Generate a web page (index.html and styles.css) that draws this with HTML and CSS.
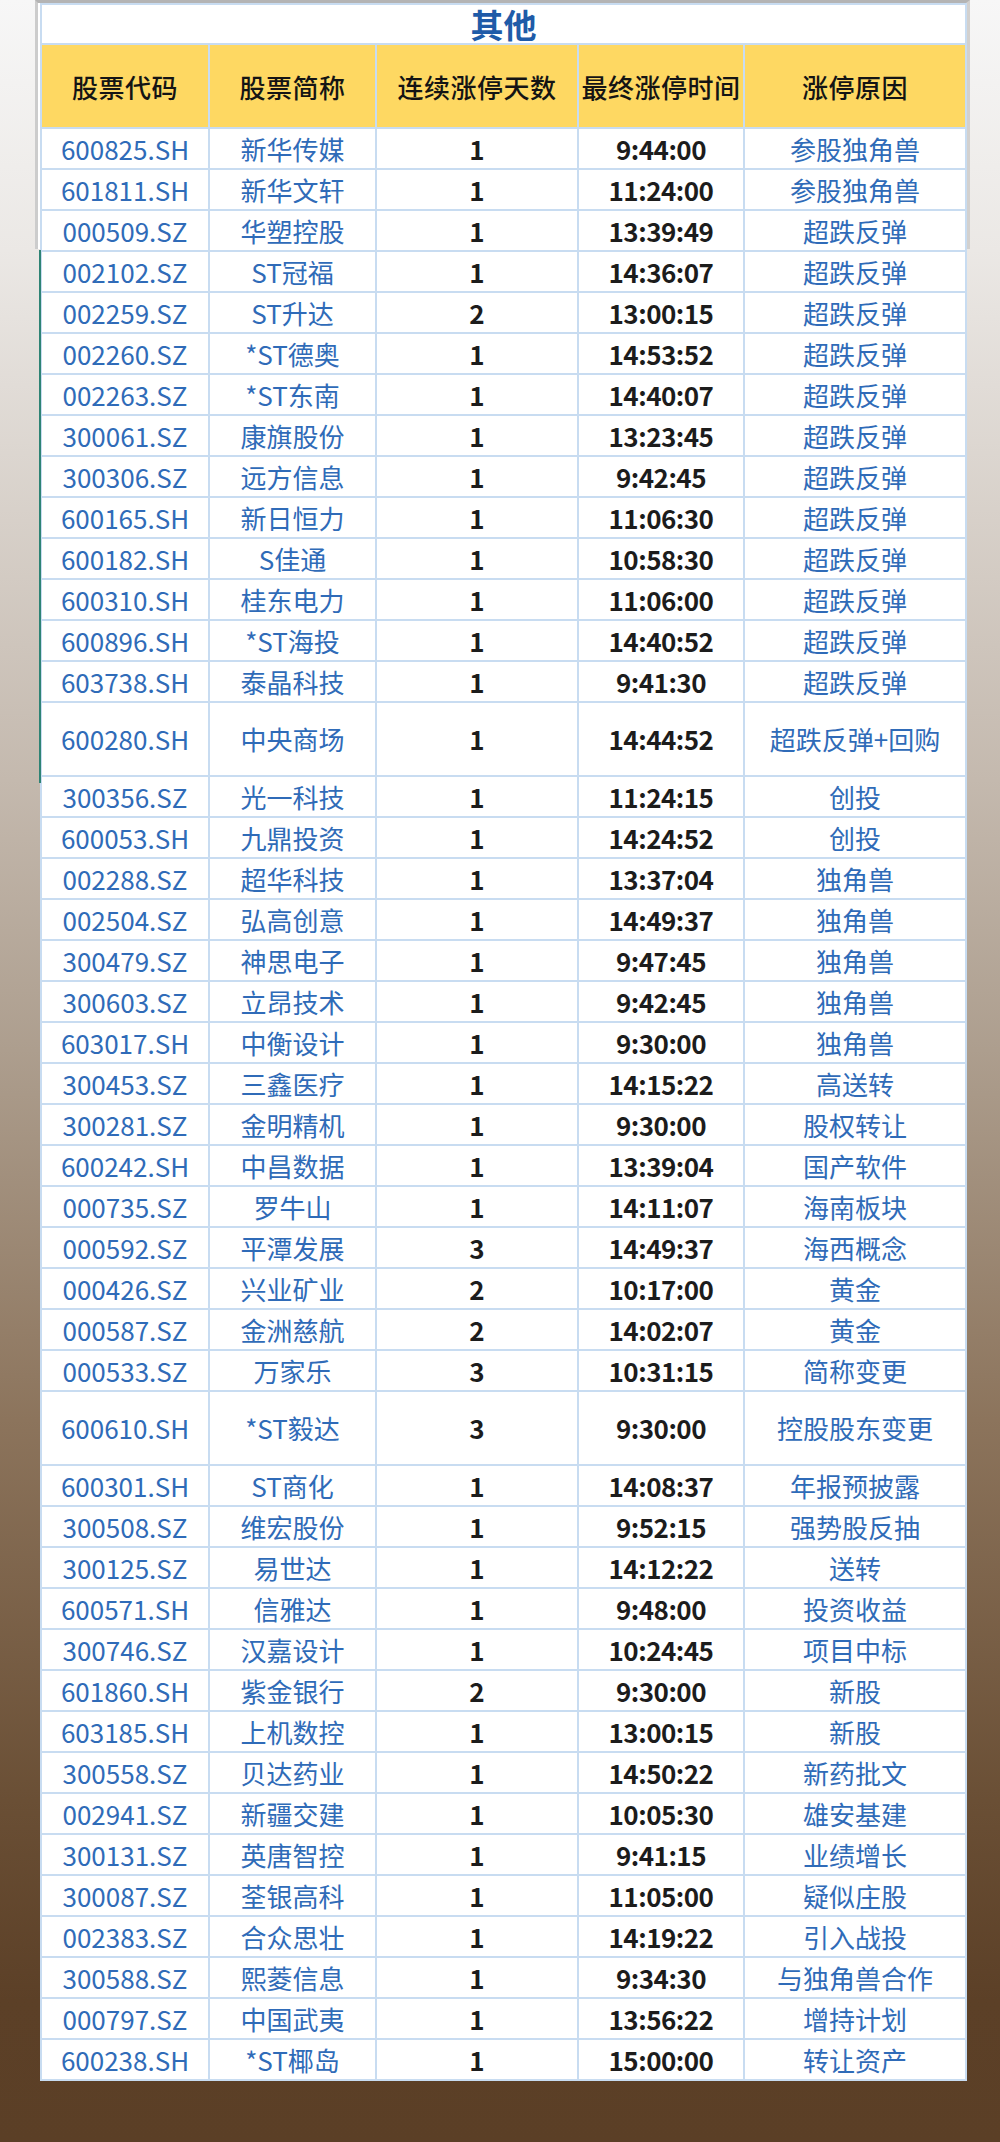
FILE: index.html
```html
<!DOCTYPE html>
<html lang="zh-CN">
<head>
<meta charset="utf-8">
<title>其他</title>
<link rel="stylesheet" href="styles.css">
</head>
<body>
<div class="page">
  <div class="card-shadow"></div>
  <div class="edge-line"></div>
  <table class="grid">
    <colgroup>
      <col class="c1"><col class="c2"><col class="c3"><col class="c4"><col class="c5">
    </colgroup>
    <thead>
      <tr class="title-row"><th colspan="5" class="title">其他</th></tr>
      <tr class="head-row">
        <th>股票代码</th><th>股票简称</th><th>连续涨停天数</th><th>最终涨停时间</th><th>涨停原因</th>
      </tr>
    </thead>
    <tbody>
      <tr><td>600825.SH</td><td>新华传媒</td><td class="n">1</td><td class="t">9:44:00</td><td>参股独角兽</td></tr>
      <tr><td>601811.SH</td><td>新华文轩</td><td class="n">1</td><td class="t">11:24:00</td><td>参股独角兽</td></tr>
      <tr><td>000509.SZ</td><td>华塑控股</td><td class="n">1</td><td class="t">13:39:49</td><td>超跌反弹</td></tr>
      <tr><td>002102.SZ</td><td>ST冠福</td><td class="n">1</td><td class="t">14:36:07</td><td>超跌反弹</td></tr>
      <tr><td>002259.SZ</td><td>ST升达</td><td class="n">2</td><td class="t">13:00:15</td><td>超跌反弹</td></tr>
      <tr><td>002260.SZ</td><td>*ST德奥</td><td class="n">1</td><td class="t">14:53:52</td><td>超跌反弹</td></tr>
      <tr><td>002263.SZ</td><td>*ST东南</td><td class="n">1</td><td class="t">14:40:07</td><td>超跌反弹</td></tr>
      <tr><td>300061.SZ</td><td>康旗股份</td><td class="n">1</td><td class="t">13:23:45</td><td>超跌反弹</td></tr>
      <tr><td>300306.SZ</td><td>远方信息</td><td class="n">1</td><td class="t">9:42:45</td><td>超跌反弹</td></tr>
      <tr><td>600165.SH</td><td>新日恒力</td><td class="n">1</td><td class="t">11:06:30</td><td>超跌反弹</td></tr>
      <tr><td>600182.SH</td><td>S佳通</td><td class="n">1</td><td class="t">10:58:30</td><td>超跌反弹</td></tr>
      <tr><td>600310.SH</td><td>桂东电力</td><td class="n">1</td><td class="t">11:06:00</td><td>超跌反弹</td></tr>
      <tr><td>600896.SH</td><td>*ST海投</td><td class="n">1</td><td class="t">14:40:52</td><td>超跌反弹</td></tr>
      <tr><td>603738.SH</td><td>泰晶科技</td><td class="n">1</td><td class="t">9:41:30</td><td>超跌反弹</td></tr>
      <tr class="tall"><td>600280.SH</td><td>中央商场</td><td class="n">1</td><td class="t">14:44:52</td><td>超跌反弹+回购</td></tr>
      <tr><td>300356.SZ</td><td>光一科技</td><td class="n">1</td><td class="t">11:24:15</td><td>创投</td></tr>
      <tr><td>600053.SH</td><td>九鼎投资</td><td class="n">1</td><td class="t">14:24:52</td><td>创投</td></tr>
      <tr><td>002288.SZ</td><td>超华科技</td><td class="n">1</td><td class="t">13:37:04</td><td>独角兽</td></tr>
      <tr><td>002504.SZ</td><td>弘高创意</td><td class="n">1</td><td class="t">14:49:37</td><td>独角兽</td></tr>
      <tr><td>300479.SZ</td><td>神思电子</td><td class="n">1</td><td class="t">9:47:45</td><td>独角兽</td></tr>
      <tr><td>300603.SZ</td><td>立昂技术</td><td class="n">1</td><td class="t">9:42:45</td><td>独角兽</td></tr>
      <tr><td>603017.SH</td><td>中衡设计</td><td class="n">1</td><td class="t">9:30:00</td><td>独角兽</td></tr>
      <tr><td>300453.SZ</td><td>三鑫医疗</td><td class="n">1</td><td class="t">14:15:22</td><td>高送转</td></tr>
      <tr><td>300281.SZ</td><td>金明精机</td><td class="n">1</td><td class="t">9:30:00</td><td>股权转让</td></tr>
      <tr><td>600242.SH</td><td>中昌数据</td><td class="n">1</td><td class="t">13:39:04</td><td>国产软件</td></tr>
      <tr><td>000735.SZ</td><td>罗牛山</td><td class="n">1</td><td class="t">14:11:07</td><td>海南板块</td></tr>
      <tr><td>000592.SZ</td><td>平潭发展</td><td class="n">3</td><td class="t">14:49:37</td><td>海西概念</td></tr>
      <tr><td>000426.SZ</td><td>兴业矿业</td><td class="n">2</td><td class="t">10:17:00</td><td>黄金</td></tr>
      <tr><td>000587.SZ</td><td>金洲慈航</td><td class="n">2</td><td class="t">14:02:07</td><td>黄金</td></tr>
      <tr><td>000533.SZ</td><td>万家乐</td><td class="n">3</td><td class="t">10:31:15</td><td>简称变更</td></tr>
      <tr class="tall"><td>600610.SH</td><td>*ST毅达</td><td class="n">3</td><td class="t">9:30:00</td><td>控股股东变更</td></tr>
      <tr><td>600301.SH</td><td>ST商化</td><td class="n">1</td><td class="t">14:08:37</td><td>年报预披露</td></tr>
      <tr><td>300508.SZ</td><td>维宏股份</td><td class="n">1</td><td class="t">9:52:15</td><td>强势股反抽</td></tr>
      <tr><td>300125.SZ</td><td>易世达</td><td class="n">1</td><td class="t">14:12:22</td><td>送转</td></tr>
      <tr><td>600571.SH</td><td>信雅达</td><td class="n">1</td><td class="t">9:48:00</td><td>投资收益</td></tr>
      <tr><td>300746.SZ</td><td>汉嘉设计</td><td class="n">1</td><td class="t">10:24:45</td><td>项目中标</td></tr>
      <tr><td>601860.SH</td><td>紫金银行</td><td class="n">2</td><td class="t">9:30:00</td><td>新股</td></tr>
      <tr><td>603185.SH</td><td>上机数控</td><td class="n">1</td><td class="t">13:00:15</td><td>新股</td></tr>
      <tr><td>300558.SZ</td><td>贝达药业</td><td class="n">1</td><td class="t">14:50:22</td><td>新药批文</td></tr>
      <tr><td>002941.SZ</td><td>新疆交建</td><td class="n">1</td><td class="t">10:05:30</td><td>雄安基建</td></tr>
      <tr><td>300131.SZ</td><td>英唐智控</td><td class="n">1</td><td class="t">9:41:15</td><td>业绩增长</td></tr>
      <tr><td>300087.SZ</td><td>荃银高科</td><td class="n">1</td><td class="t">11:05:00</td><td>疑似庄股</td></tr>
      <tr><td>002383.SZ</td><td>合众思壮</td><td class="n">1</td><td class="t">14:19:22</td><td>引入战投</td></tr>
      <tr><td>300588.SZ</td><td>熙菱信息</td><td class="n">1</td><td class="t">9:34:30</td><td>与独角兽合作</td></tr>
      <tr><td>000797.SZ</td><td>中国武夷</td><td class="n">1</td><td class="t">13:56:22</td><td>增持计划</td></tr>
      <tr><td>600238.SH</td><td>*ST椰岛</td><td class="n">1</td><td class="t">15:00:00</td><td>转让资产</td></tr>
    </tbody>
  </table>
</div>
</body>
</html>
```

FILE: styles.css
```css
html, body {
  margin: 0;
  padding: 0;
}

body {
  width: 1000px;
  height: 2142px;
  overflow: hidden;
  background: linear-gradient(180deg,
    #f7f7f7 0px,
    #ebe8e5 250px,
    #c4b9ae 780px,
    #ad9e8e 1050px,
    #8c745c 1420px,
    #6a4f35 1800px,
    #5c4027 2000px,
    #5b3f26 2142px);
  font-family: "Noto Sans CJK SC", "Microsoft YaHei", sans-serif;
}

.page {
  position: relative;
  padding: 3px 0 0 40px;
}

.card-shadow {
  position: absolute;
  left: 35px;
  top: 0;
  width: 928px;
  height: 246px;
  background: #ffffff;
  border-top: 3px solid #b4b4b4;
  border-left: 3px solid #cccccc;
  border-right: 4px solid #d2d0ce;
  z-index: 0;
}

.edge-line {
  position: absolute;
  left: 39px;
  top: 250px;
  width: 2px;
  height: 533px;
  background: #2e8374;
  z-index: 2;
}

.grid {
  position: relative;
  z-index: 1;
  width: 925px;
  border-collapse: collapse;
  table-layout: fixed;
  background: #ffffff;
}

.c1 { width: 168px; }
.c2 { width: 167px; }
.c3 { width: 202px; }
.c4 { width: 166px; }
.c5 { width: 222px; }

.grid th,
.grid td {
  border: 2px solid #c8dcf1;
  padding: 0;
  text-align: center;
  white-space: nowrap;
}

.grid td {
  overflow: hidden;
}

.title {
  height: 38px;
  font-size: 33px;
  line-height: 38px;
  font-weight: 700;
  color: #1f5ba8;
  background: #ffffff;
}

.head-row th {
  height: 82px;
  background: #fed862;
  color: #141414;
  font-size: 26px;
  font-weight: 500;
  letter-spacing: 0.5px;
}

.grid td {
  height: 39px;
  line-height: 39px;
  font-size: 26px;
  color: #2f6bb8;
}

.grid tr.tall td {
  height: 72px;
  line-height: 72px;
}

.grid td.n,
.grid td.t {
  color: #1c1c1c;
  font-weight: 600;
}

.grid td.t {
  letter-spacing: -0.5px;
}
```
